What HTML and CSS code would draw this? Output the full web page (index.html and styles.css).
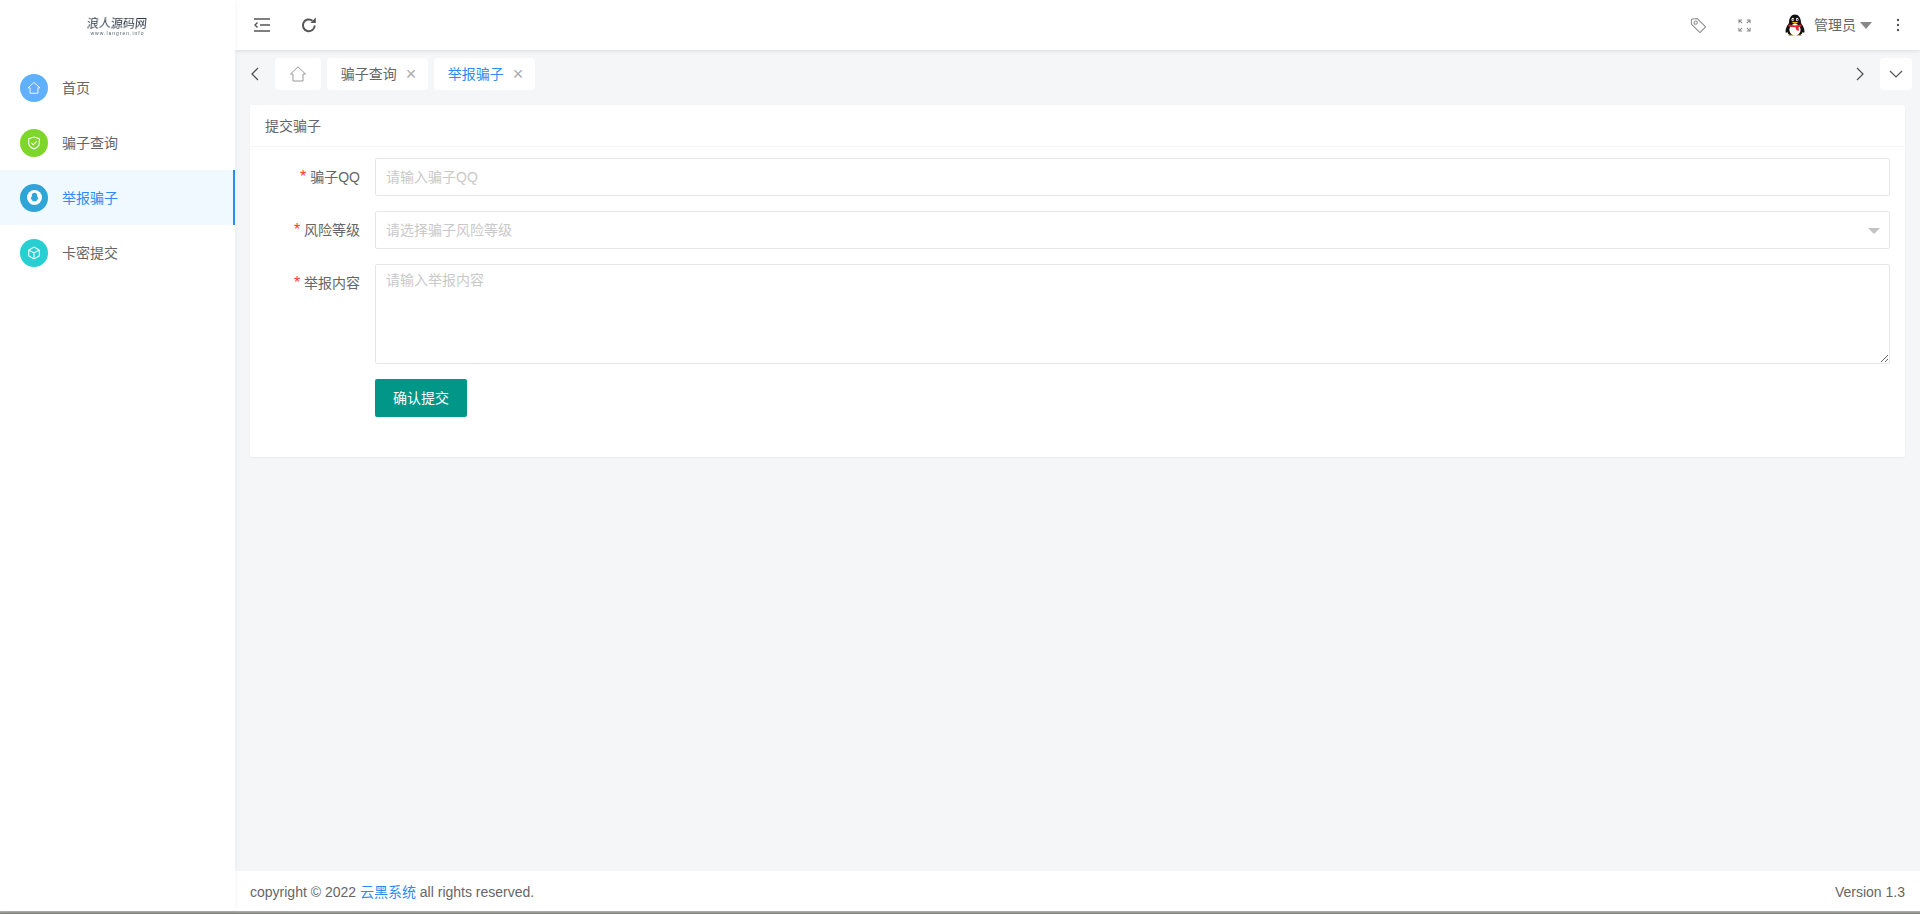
FILE: index.html
```html
<!DOCTYPE html>
<html lang="zh-CN">
<head>
<meta charset="utf-8">
<title>举报骗子</title>
<link rel="stylesheet" href="styles.css">
</head>
<body>
<div class="app">
  <aside class="sidebar">
    <div class="logo">
      <span class="logo-name">浪人源码网</span>
      <span class="logo-url">www.langren.info</span>
    </div>
    <nav class="nav">
      <a class="nav-item">
        <span class="nav-icon blue"><svg viewBox="0 0 16 16" width="14" height="14" fill="none" stroke="#fff" stroke-width="1"><path d="M1.2 7.8 8 1.6l6.8 6.2H12.500v6.200h-9V7.800z"/></svg></span>
        <span>首页</span>
      </a>
      <a class="nav-item">
        <span class="nav-icon green"><svg viewBox="0 0 16 16" width="14" height="14" fill="none" stroke="#fff" stroke-width="1.2"><path d="M8 1.2 14 3v5.4c0 3.2-3 5.3-6 6.4-3-1.1-6-3.2-6-6.4V3z"/><path d="m5 7.800 2.200 2.200L11 6.200"/></svg></span>
        <span>骗子查询</span>
      </a>
      <a class="nav-item active">
        <span class="nav-icon sky"><svg viewBox="0 0 16 16" width="15" height="15"><circle cx="8" cy="8" r="8" fill="#fff"/><path d="M8 2.800c1.900 0 2.800 1.400 2.800 3 0 .9.200 1.100.800 2.300.5 1.100.5 2.200.1 2.200-.3 0-.6-.3-.8-.7-.1.700-.4 1.200-.8 1.500.5.200.6.900-.3.900H6.200c-.9 0-.8-.7-.3-.9-.4-.3-.7-.8-.8-1.500-.2.400-.5.700-.8.700-.4 0-.4-1.100.1-2.200.6-1.200.8-1.400.8-2.300 0-1.600.9-3 2.800-3z" fill="#2fa4d7"/></svg></span>
        <span>举报骗子</span>
      </a>
      <a class="nav-item">
        <span class="nav-icon teal"><svg viewBox="0 0 16 16" width="14" height="14" fill="none" stroke="#fff" stroke-width="1.200"><path d="M8 1.200 14 4.600v6.800l-6 3.400-6-3.400V4.600z"/><path d="M2 4.600 8 8l6-3.400M8 8v6.800"/></svg></span>
        <span>卡密提交</span>
      </a>
    </nav>
  </aside>
  <div class="main">
    <header class="topbar">
      <div class="tools">
        <svg viewBox="0 0 16 14" width="16" height="14" fill="none" stroke="#555" stroke-width="1.600"><path d="M0 1h16M6 7h10M0 13h16"/><path d="M3.500 4.500 1 7l2.500 2.500" stroke-width="1.400"/></svg>
        <svg viewBox="0 0 16 16" width="16" height="16" fill="none" stroke="#555" stroke-width="2"><path d="M13.700 8.500A5.900 5.900 0 1 1 11.500 3.700"/><path d="M14.800.600v5.400H9.400z" fill="#555" stroke="none"/></svg>
      </div>
      <div class="tools-right">
        <svg class="tag" viewBox="0 0 18 18" width="17" height="17" fill="none" stroke="#8c8c8c" stroke-width="1.100"><path d="M1.500 2.500 7.500 1.500 16.500 10.500 10.500 16.500 1.500 7.500z" stroke-linejoin="round"/><circle cx="6" cy="6" r="1.700"/></svg>
        <svg class="expand" viewBox="0 0 14 14" width="13" height="13" fill="none" stroke="#8c8c8c" stroke-width="1.100"><path d="M1 4.500V1h3.500M9.500 1H13v3.500M13 9.500V13H9.500M4.500 13H1V9.500M1 1l3.500 3.500M13 1 9.500 4.500M13 13 9.500 9.500M1 13l3.500-3.500"/></svg>
        <svg class="penguin" viewBox="0 0 20 23" width="20" height="23">
          <path d="M4 9C4 3.500 6.500.5 10 .5S16 3.500 16 9c1.500 2 3.500 5 3.500 8.500 0 1.500-.8 1.500-1.800.5-.5 1.500-1.500 2.500-2.700 3.200H5C3.800 20.500 2.800 19.500 2.300 18c-1 1-1.800 1-1.800-.5C.5 14 2.500 11 4 9z" fill="#111"/>
          <ellipse cx="10" cy="15.700" rx="5.600" ry="6" fill="#fff"/>
          <ellipse cx="7.800" cy="5.500" rx="1.300" ry="1.700" fill="#fff"/>
          <ellipse cx="12.200" cy="5.500" rx="1.300" ry="1.700" fill="#fff"/>
          <circle cx="8" cy="5.800" r=".7" fill="#111"/><circle cx="12.300" cy="5.800" r=".7" fill="#111"/>
          <path d="M6.500 8h7l-3.500 2.200z" fill="#f7b500"/>
          <path d="M3.500 10.300c4 1.500 9 1.500 13 0v2c-1 .5-2 .8-3 1l.5 3.500-2.500-.5-1-3c-2.500.2-5-.2-7-1z" fill="#e8202a"/>
          <path d="M3 22c0-1 2.500-1.500 5-1.200V22zM17 22c0-1-2.500-1.500-5-1.200V22z" fill="#f7b500"/>
        </svg>
        <span class="user">管理员</span>
        <span class="caret"></span>
        <svg class="dots" viewBox="0 0 4 14" width="4" height="14" fill="#555"><circle cx="2" cy="2" r="1.200"/><circle cx="2" cy="7" r="1.200"/><circle cx="2" cy="12" r="1.200"/></svg>
      </div>
    </header>
    <div class="tabbar">
      <svg class="chev" viewBox="0 0 8 14" width="8" height="14" fill="none" stroke="#555" stroke-width="1.300"><path d="M7 1 1 7l6 6"/></svg>
      <div class="tab tab-home"><svg viewBox="0 0 16 16" width="16" height="16" fill="none" stroke="#999" stroke-width="1"><path d="M.5 8 8 .8 15.500 8H13v7H3V8z"/></svg></div>
      <div class="tab tab-closable"><span>骗子查询</span><span class="close">×</span></div>
      <div class="tab tab-closable current"><span>举报骗子</span><span class="close">×</span></div>
      <div class="tab-spacer"></div>
      <svg class="chev chev-right" viewBox="0 0 8 14" width="8" height="14" fill="none" stroke="#555" stroke-width="1.300"><path d="m1 1 6 6-6 6"/></svg>
      <div class="tab tab-more"><svg viewBox="0 0 14 8" width="14" height="8" fill="none" stroke="#555" stroke-width="1.200"><path d="m1 1 6 6 6-6"/></svg></div>
    </div>
    <main class="content">
      <section class="card">
        <div class="card-head">提交骗子</div>
        <form class="card-body">
          <div class="row">
            <label class="label"><span class="req">*</span> 骗子QQ</label>
            <input class="field" type="text" placeholder="请输入骗子QQ">
          </div>
          <div class="row">
            <label class="label"><span class="req">*</span> 风险等级</label>
            <div class="select">
              <input class="field" type="text" placeholder="请选择骗子风险等级" readonly>
              <span class="select-caret"></span>
            </div>
          </div>
          <div class="row">
            <label class="label"><span class="req">*</span> 举报内容</label>
            <textarea class="field area" placeholder="请输入举报内容"></textarea>
          </div>
          <div class="row">
            <span class="label"></span>
            <button class="btn" type="button">确认提交</button>
          </div>
        </form>
      </section>
    </main>
    <footer class="footer">
      <span>copyright © 2022 <a class="link">云黑系统</a> all rights reserved.</span>
      <span>Version 1.3</span>
    </footer>
  </div>
</div>
<div class="screen-edge"></div>
</body>
</html>
```
FILE: styles.css
```css
* { box-sizing: border-box; }
html, body { margin: 0; height: 914px; overflow: hidden; }
body {
  display: flex;
  flex-direction: column;
  background: #fff;
  color: #666;
  font: 14px/20px "Liberation Sans", "Noto Sans CJK SC", sans-serif;
}
.app { flex: 1; display: flex; min-height: 0; }

.sidebar {
  width: 235px;
  flex: none;
  background: #fff;
  position: relative;
  z-index: 2;
  box-shadow: 2px 0 6px rgba(0,0,0,.03);
}
.logo {
  height: 60px;
  padding-top: 16px;
  display: flex;
  flex-direction: column;
  align-items: center;
}
.logo-name {
  font: 400 12px/14px "Noto Sans CJK SC", sans-serif;
  color: #2f3a48;
  transform: skewX(-6deg);
  filter: blur(.3px);
}
.logo-url {
  font: 5px/6px "Liberation Sans", sans-serif;
  letter-spacing: 1px;
  color: #56606e;
  filter: blur(.2px);
}
.nav-item {
  height: 55px;
  display: flex;
  align-items: center;
  gap: 14px;
  padding-left: 20px;
  color: #666;
}
.nav-item.active {
  background: #f0f9ff;
  color: #2d8cf0;
  border-right: 2px solid #2d8cf0;
}
.nav-icon {
  width: 28px;
  height: 28px;
  border-radius: 50%;
  display: flex;
  align-items: center;
  justify-content: center;
}
.blue { background: #5fb0ff; }
.green { background: #7ed62b; }
.sky { background: #2fa4d7; }
.teal { background: #27cfd3; }

.main { flex: 1; min-width: 0; display: flex; flex-direction: column; background: #f5f6f8; }
.topbar {
  height: 50px;
  flex: none;
  background: #fff;
  box-shadow: 0 1px 4px rgba(0,0,0,.1);
  display: flex;
  align-items: center;
  justify-content: space-between;
  padding: 0 20px 0 19px;
  position: relative;
}
.tools { display: flex; align-items: center; gap: 31px; }
.tools-right { display: flex; align-items: center; }
.tag { margin-right: 31px; }
.expand { margin-right: 34px; }
.penguin { margin-right: 9px; }
.user { color: #666; }
.caret {
  width: 0; height: 0;
  margin: 1px 0 0 4px;
  border: 6px solid transparent;
  border-top: 7px solid #888;
  border-bottom: 0;
}
.dots { margin-left: 24px; }

.tabbar {
  height: 55px;
  flex: none;
  padding: 8px 8px 0 16px;
  display: flex;
  align-items: flex-start;
  gap: 6px;
}
.chev { margin: 9px 10px 0 0; }
.chev-right { margin: 9px 10px 0 0; }
.tab {
  height: 32px;
  background: #fff;
  border-radius: 4px;
  display: flex;
  align-items: center;
  justify-content: center;
  width: 101px;
  color: #666;
}
.tab-closable { gap: 9px; padding-left: 2px; }
.tab-home { width: 46px; }
.tab-more { width: 32px; }
.tab-spacer { flex: 1; }
.tab.current { color: #2d8cf0; }
.close { color: #aaa; font-size: 18px; }

.content { flex: 1; min-height: 0; padding: 0 15px; }
.card {
  background: #fff;
  border-radius: 2px;
  box-shadow: 0 1px 2px rgba(0,0,0,.05);
  height: 352px;
}
.card-head {
  height: 42px;
  padding: 0 15px;
  line-height: 42px;
  border-bottom: 1px solid #f6f6f6;
}
.card-body { padding: 11px 15px 0 15px; }
.row { display: flex; align-items: flex-start; margin-bottom: 15px; }
.label {
  width: 95px;
  flex: none;
  margin-right: 15px;
  text-align: right;
  line-height: 38px;
  color: #666;
}
.req { color: #ff3b1f; font-size: 16px; }
.field {
  flex: 1;
  width: 100%;
  min-width: 0;
  height: 38px;
  border: 1px solid #e6e6e6;
  border-radius: 2px;
  padding: 0 10px;
  background: #fff;
  color: #666;
  font: inherit;
  outline: none;
}
.field::placeholder { color: #c9c9c9; opacity: 1; }
.select { flex: 1; position: relative; display: flex; }
.select-caret {
  position: absolute;
  right: 10px;
  top: 17px;
  width: 0; height: 0;
  border: 6px solid transparent;
  border-top: 6px solid #c2c2c2;
  border-bottom: 0;
}
.area { display: block; height: 100px; padding: 5px 10px; line-height: 20px; }
.btn {
  width: 92px;
  height: 38px;
  border: 0;
  border-radius: 2px;
  background: #009688;
  color: #fff;
  font: inherit;
  padding: 0;
}
.footer {
  height: 40px;
  flex: none;
  background: #fff;
  display: flex;
  align-items: center;
  justify-content: space-between;
  padding: 2px 15px 0;
  color: #666;
}
.link { color: #2d8cf0; }
.screen-edge { height: 3px; flex: none; background: linear-gradient(#b4b4b0, #7c7c78); }
```
